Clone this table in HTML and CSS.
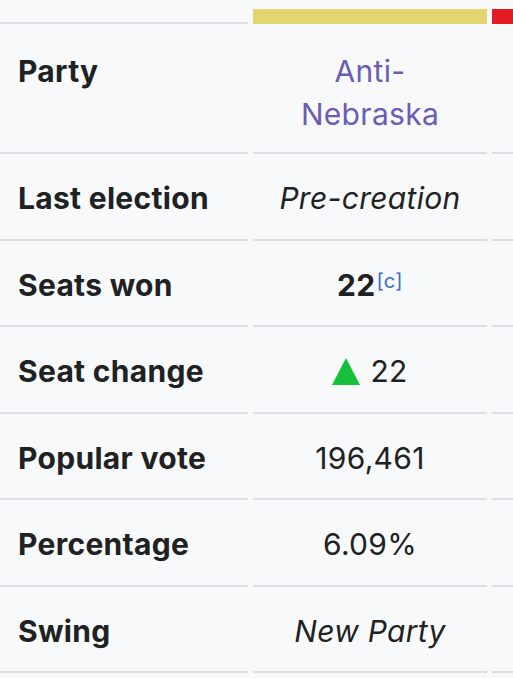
FILE: index.html
```html
<!DOCTYPE html>
<html>
<title>Infobox</title>

<head>
    <meta charset="utf-8">
    <link rel="stylesheet" href="styles.css">
</head>

<body>
    <div class="infobox">
        <div class="cell head"></div>
        <div class="swatch yellow"></div>
        <div class="swatch red"></div>

        <div class="cell label party">Party</div>
        <div class="cell value party"><a href="#">Anti-Nebraska</a></div>
        <div class="cell value party"></div>

        <div class="cell label">Last election</div>
        <div class="cell value"><i>Pre-creation</i></div>
        <div class="cell value"></div>

        <div class="cell label">Seats won</div>
        <div class="cell value"><b>22</b><sup><a href="#" class="ref">[c]</a></sup></div>
        <div class="cell value"></div>

        <div class="cell label">Seat change</div>
        <div class="cell value"><span class="up"></span>22</div>
        <div class="cell value"></div>

        <div class="cell label">Popular vote</div>
        <div class="cell value">196,461</div>
        <div class="cell value"></div>

        <div class="cell label">Percentage</div>
        <div class="cell value">6.09%</div>
        <div class="cell value"></div>

        <div class="cell label">Swing</div>
        <div class="cell value"><i>New Party</i></div>
        <div class="cell value"></div>
    </div>
</body>

</html>
```

FILE: styles.css
```css
body {
    font-family: Inter, "Noto Sans", sans-serif;
    background-color: #f8f9fa;
    color: #202122;
    margin: 0;
    overflow: hidden;
}

.infobox {
    display: grid;
    grid-template-columns: 248px 234px 234px;
    grid-template-rows: 24px 130px repeat(6, 86.5px);
    column-gap: 5px;
    font-size: 30px;
    letter-spacing: 0.3px;
}

.cell {
    border-bottom: 2px solid #dcdee2;
    display: flex;
    align-items: center;
    padding-top: 5px;
}

.cell.party {
    align-items: flex-start;
    padding-top: 26px;
}

.swatch {
    height: 15px;
    align-self: end;
}

.yellow {
    background-color: #e3d66f;
}

.red {
    background-color: #e31c23;
}

.label {
    font-weight: bold;
    padding-left: 18px;
    line-height: 43px;
}

.value {
    justify-content: center;
    text-align: center;
    padding-left: 18px;
    padding-right: 18px;
    line-height: 43px;
}

.value a {
    color: #6b5db3;
    text-decoration: none;
}

.value b {
    font-weight: bold;
}

sup {
    font-size: 20px;
    line-height: 1;
    align-self: flex-start;
    margin-top: 25px;
    margin-left: 1px;
}

.value a.ref {
    color: #3f6ac4;
}

.up {
    width: 0;
    height: 0;
    border-left: 14px solid transparent;
    border-right: 14px solid transparent;
    border-bottom: 27px solid #14c13a;
    margin-right: 10px;
}
```
